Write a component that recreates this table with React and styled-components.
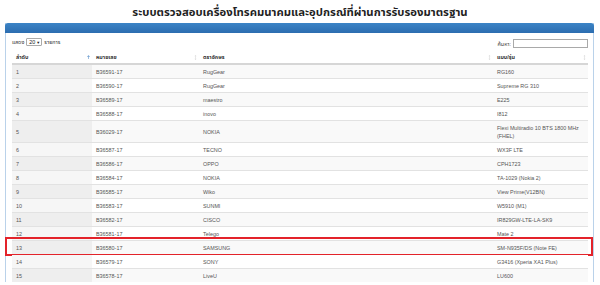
import React from "react";
import styled, { createGlobalStyle } from "styled-components";

const Global = createGlobalStyle`
  html, body { margin: 0; padding: 0; background: #fff; }
  body { font-family: "Liberation Sans", Arial, Tahoma, "Noto Sans Thai", sans-serif; }
`;

const Page = styled.div`
  width: 600px;
  height: 285px;
  overflow: hidden;
`;

const Title = styled.h1`
  margin: 0;
  height: 23px;
  line-height: 26px;
  text-align: center;
  font-family: Tahoma, "Noto Sans Thai", "Liberation Sans", sans-serif;
  font-size: 11.3px;
  font-weight: bold;
  color: #1f1f1f;
`;

const Panel = styled.section`
  margin: 0 6px 0 5px;
  border-left: 1px solid #bad2ea;
  border-right: 1px solid #bad2ea;
`;

const PanelHeading = styled.div`
  height: 10px;
  margin: 0 -1px;
  border-radius: 3px 3px 0 0;
  background: linear-gradient(#3c84c6, #2c6db0);
`;

const PanelBody = styled.div`
  padding: 0 5px 0 6px;
`;

const Controls = styled.div`
  display: flex;
  justify-content: space-between;
  align-items: center;
  height: 12px;
  padding: 4px 0 1px;
  font-size: 5.4px;
  color: #333;
`;

const Group = styled.div`
  display: flex;
  align-items: center;
  gap: ${(p) => p.$gap || 2}px;
  margin-top: ${(p) => p.$dy || 0}px;
`;

const SelectBox = styled.span`
  display: inline-flex;
  align-items: center;
  justify-content: space-between;
  box-sizing: border-box;
  width: 16px;
  height: 8px;
  padding: 0 1px 0 2px;
  border: 1px solid #aaa;
  border-radius: 1px;
  font-size: 5.4px;
  color: #222;
  background: #fff;
`;

const Caret = styled.span`
  font-size: 4px;
`;

const SearchInput = styled.span`
  display: inline-block;
  box-sizing: border-box;
  width: 75px;
  height: 9px;
  border: 1px solid #a9a9a9;
  background: #fff;
`;

const Table = styled.table`
  width: 576px;
  border-collapse: collapse;
  table-layout: fixed;
  font-size: 5.4px;
  line-height: 8px;
`;

const Col = styled.col`
  width: ${(p) => p.$w}px;
`;

const Th = styled.th`
  text-align: left;
  font-weight: bold;
  color: #333;
  padding: 3px 2px 2px 4px;
  border-bottom: 2px solid #d6d6d6;
`;

const HeadInner = styled.span`
  display: flex;
  justify-content: space-between;
  align-items: center;
`;

const Row = styled.tr`
  position: relative;
  background: ${(p) => (p.$odd ? "#f9f9f9" : "#fff")};
`;

const Td = styled.td`
  padding: 3px 4px 2px 4px;
  border-top: 1px solid #e2e2e2;
  color: #555;
  vertical-align: middle;
  background: ${(p) => (p.$sorted ? (p.$odd ? "#eeeeee" : "#f6f6f6") : "transparent")};
`;

const Highlight = styled.span`
  position: absolute;
  left: -7px;
  right: -5px;
  top: -4px;
  bottom: -1px;
  border: 2px solid #e3232a;
  pointer-events: none;
`;

const SortIcon = ({ active }) =>
  active ? (
    <svg width="3" height="4" viewBox="0 0 3 4">
      <path d="M1.5 0 L3 2 L0 2 Z" fill="#7fa9d6" />
      <rect x="1" y="2" width="1" height="2" fill="#9dbde0" />
    </svg>
  ) : (
    <svg width="3" height="5" viewBox="0 0 3 5">
      <path d="M1.5 0 L2.5 1.2 L0.5 1.2 Z M1.5 5 L2.5 3.8 L0.5 3.8 Z" fill="#d8d8d8" />
      <rect x="1.1" y="1" width="0.8" height="3" fill="#e2e2e2" />
    </svg>
  );

const rows = [
  ["1", "B36591-17", "RugGear", "RG160"],
  ["2", "B36590-17", "RugGear", "Supreme RG 310"],
  ["3", "B36589-17", "maestro", "E225"],
  ["4", "B36588-17", "inovo", "I812"],
  ["5", "B36029-17", "NOKIA", "Flexi Multiradio 10 BTS 1800 MHz (FHEL)"],
  ["6", "B36587-17", "TECNO", "WX3F LTE"],
  ["7", "B36586-17", "OPPO", "CPH1723"],
  ["8", "B36584-17", "NOKIA", "TA-1029 (Nokia 2)"],
  ["9", "B36585-17", "Wiko", "View Prime(V12BN)"],
  ["10", "B36583-17", "SUNMI", "W5910 (M1)"],
  ["11", "B36582-17", "CISCO", "IR829GW-LTE-LA-SK9"],
  ["12", "B36581-17", "Telego", "Mate 2"],
  ["13", "B36580-17", "SAMSUNG", "SM-N935F/DS (Note FE)"],
  ["14", "B36579-17", "SONY", "G3416 (Xperia XA1 Plus)"],
  ["15", "B36578-17", "LiveU", "LU600"],
];

const headers = [
  { label: "ลำดับ", active: true },
  { label: "หมายเลข" },
  { label: "ตราอักษร" },
  { label: "แบบ/รุ่น" },
];

export default function App() {
  return (
    <Page>
      <Global />
      <Title>ระบบตรวจสอบเครื่องโทรคมนาคมและอุปกรณ์ที่ผ่านการรับรองมาตรฐาน</Title>
      <Panel>
        <PanelHeading />
        <PanelBody>
          <Controls>
            <Group $gap={2} $dy={-2}>
              <span>แสดง</span>
              <SelectBox>
                <span>20</span>
                <Caret>▼</Caret>
              </SelectBox>
              <span>รายการ</span>
            </Group>
            <Group $gap={2} $dy={1}>
              <span>ค้นหา:</span>
              <SearchInput />
            </Group>
          </Controls>
          <Table>
            <colgroup>
              <Col $w={80} />
              <Col $w={107} />
              <Col $w={294} />
              <Col $w={95} />
            </colgroup>
            <thead>
              <tr>
                {headers.map((h) => (
                  <Th key={h.label}>
                    <HeadInner>
                      <span>{h.label}</span>
                      <SortIcon active={h.active} />
                    </HeadInner>
                  </Th>
                ))}
              </tr>
            </thead>
            <tbody>
              {rows.map((r, i) => {
                const odd = i % 2 === 0;
                return (
                  <Row key={r[0]} $odd={odd}>
                    <Td $sorted $odd={odd}>
                      {r[0] === "13" && <Highlight />}
                      {r[0]}
                    </Td>
                    <Td>{r[1]}</Td>
                    <Td>{r[2]}</Td>
                    <Td>{r[3]}</Td>
                  </Row>
                );
              })}
            </tbody>
          </Table>
        </PanelBody>
      </Panel>
    </Page>
  );
}
